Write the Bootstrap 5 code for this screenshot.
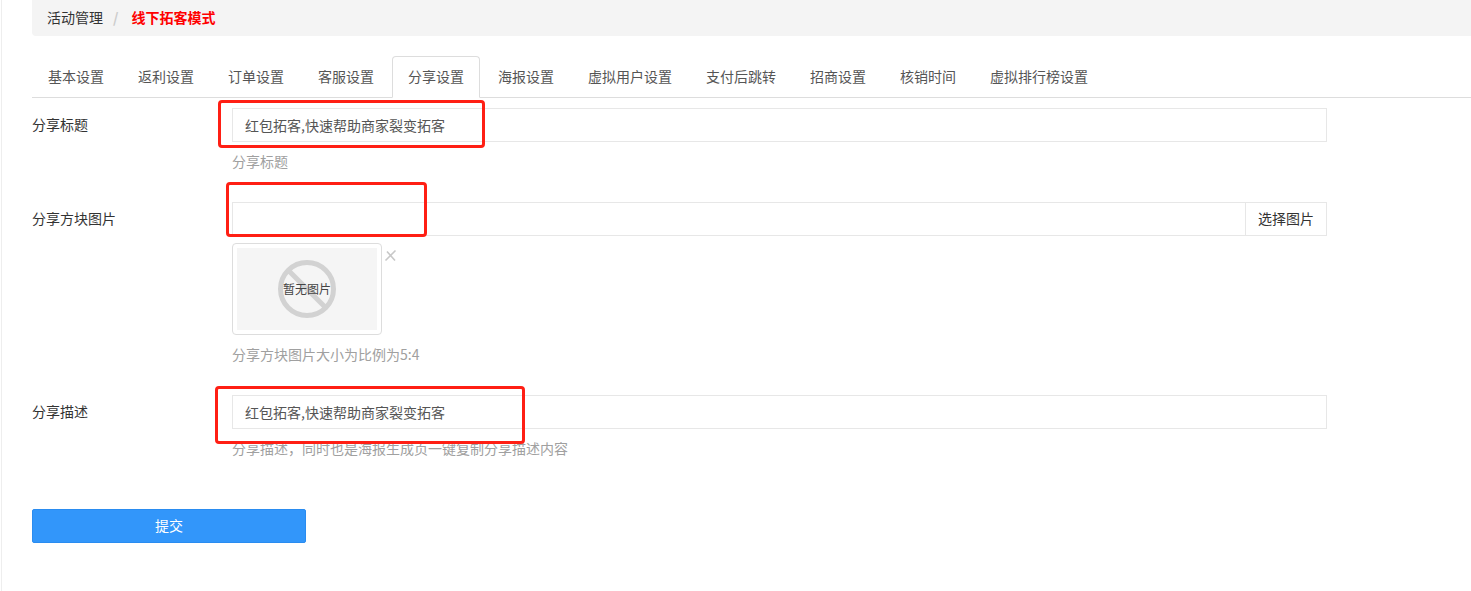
<!DOCTYPE html>
<html lang="zh">
<head>
<meta charset="utf-8">
<title>分享设置</title>
<link href="https://cdn.jsdelivr.net/npm/bootstrap@5.3.0/dist/css/bootstrap.min.css" rel="stylesheet">
<style>
html,body{height:591px;overflow:hidden;background:#fff}
body{font-family:"Noto Sans CJK SC","Liberation Sans",sans-serif;font-size:14px;color:#333}
.page-shell{margin-left:1px;border-left:1px solid #eee;height:591px;padding:0 0 0 30px}
.crumbs{background:#f4f4f4;height:36px;margin:0;padding:0 15px;border-radius:0 0 0 4px;align-items:center;font-size:14px;line-height:36px;--bs-breadcrumb-divider-color:#ccc;--bs-breadcrumb-item-padding-x:10px}
.crumbs .breadcrumb-item{color:#333;height:36px;margin-top:-2px}
.crumbs .breadcrumb-item.active{color:#f00;font-weight:700}
.crumbs .breadcrumb-item.active::before{padding-right:13px}
.tabs-row{margin-top:20px;height:42px;--bs-nav-tabs-border-color:#ddd;--bs-nav-tabs-border-radius:4px;--bs-nav-link-padding-x:15px;--bs-nav-link-padding-y:0;gap:2px}
.tabs-row .nav-link{height:42px;line-height:39px;color:#555;font-size:14px;margin:0}
.tabs-row .nav-link.active{color:#555;border-color:#ddd #ddd #fff}
.field-row{display:flex;width:1295px}
.field-label{width:200px;flex:none;padding-top:6px;line-height:20px;margin:0;color:#333}
.field-body{flex:1;position:relative}
.field-input{height:34px;border:1px solid #e7e7e7;border-radius:0;padding:0 12px;font-size:14px;color:#555;box-shadow:none}
.pick-btn{border:1px solid #e7e7e7;border-radius:0;background:#fff;color:#333;font-size:14px;padding:0 0 2px;height:34px;width:82px}
.field-hint{margin:9px 0 0;line-height:20px;color:#a0a0a0;font-size:14px}
.row-one{margin-top:10px}
.row-two{margin-top:31px}
.row-three{margin-top:31px}
.thumb-wrap{display:flex;margin-top:7px;position:relative;width:170px}
.thumb-frame{width:150px;height:92px;border:1px solid #ddd;border-radius:4px;padding:4px;background:#fff}
.thumb-inner{height:82px;background:#f5f5f5;display:flex;align-items:center;justify-content:center;position:relative}
.thumb-inner svg{position:absolute;left:40px;top:11px}
.thumb-text{position:relative;font-size:12px;color:#444}
.thumb-close{position:absolute;left:152px;top:6px;line-height:0}
.callout{position:absolute;border:3px solid #ff1f14;border-radius:4px;pointer-events:none}
.callout-one{left:-14px;top:-8px;width:267px;height:48px}
.callout-two{left:-6px;top:-20px;width:201px;height:55px}
.callout-three{left:-17px;top:-9px;width:310px;height:58px}
.submit-btn{display:block;width:274px;height:34px;margin-top:51px;padding:0 0 2px;border-radius:2px;background:#3296fa;border:1px solid #2a8cf0;color:#fff;font-size:14px}
</style>
</head>
<body>
<div class="page-shell">
  <ol class="breadcrumb crumbs d-flex">
    <li class="breadcrumb-item">活动管理</li>
    <li class="breadcrumb-item active">线下拓客模式</li>
  </ol>
  <ul class="nav nav-tabs tabs-row">
    <li class="nav-item"><a class="nav-link" href="#">基本设置</a></li>
    <li class="nav-item"><a class="nav-link" href="#">返利设置</a></li>
    <li class="nav-item"><a class="nav-link" href="#">订单设置</a></li>
    <li class="nav-item"><a class="nav-link" href="#">客服设置</a></li>
    <li class="nav-item"><a class="nav-link active" href="#">分享设置</a></li>
    <li class="nav-item"><a class="nav-link" href="#">海报设置</a></li>
    <li class="nav-item"><a class="nav-link" href="#">虚拟用户设置</a></li>
    <li class="nav-item"><a class="nav-link" href="#">支付后跳转</a></li>
    <li class="nav-item"><a class="nav-link" href="#">招商设置</a></li>
    <li class="nav-item"><a class="nav-link" href="#">核销时间</a></li>
    <li class="nav-item"><a class="nav-link" href="#">虚拟排行榜设置</a></li>
  </ul>
  <form onsubmit="return false">
    <div class="field-row row-one">
      <label class="field-label">分享标题</label>
      <div class="field-body">
        <input class="form-control field-input" value="红包拓客,快速帮助商家裂变拓客">
        <p class="field-hint">分享标题</p>
        <div class="callout callout-one"></div>
      </div>
    </div>
    <div class="field-row row-two">
      <label class="field-label">分享方块图片</label>
      <div class="field-body">
        <div class="input-group flex-nowrap">
          <input class="form-control field-input">
          <button class="btn pick-btn" type="button" style="margin-left:-1px">选择图片</button>
        </div>
        <div class="thumb-wrap">
          <div class="thumb-frame">
            <div class="thumb-inner">
              <svg width="60" height="60" viewBox="0 0 60 60"><circle cx="30" cy="30" r="26.5" fill="none" stroke="#d2d2d2" stroke-width="5"/><path d="M11 11 49 49" stroke="#d2d2d2" stroke-width="5"/></svg>
              <span class="thumb-text">暂无图片</span>
            </div>
          </div>
          <span class="thumb-close"><svg width="13" height="13" viewBox="0 0 13 13"><path d="M1.5 11.5 11.5 1.5M3 2.5l8 9" stroke="#c8c8c8" stroke-width="1.6" fill="none"/></svg></span>
        </div>
        <p class="field-hint">分享方块图片大小为比例为5:4</p>
        <div class="callout callout-two"></div>
      </div>
    </div>
    <div class="field-row row-three">
      <label class="field-label">分享描述</label>
      <div class="field-body">
        <input class="form-control field-input" value="红包拓客,快速帮助商家裂变拓客">
        <p class="field-hint">分享描述，同时也是海报生成页一键复制分享描述内容</p>
        <div class="callout callout-three"></div>
      </div>
    </div>
    <button class="btn btn-primary submit-btn" type="submit">提交</button>
  </form>
</div>
<script src="https://cdn.jsdelivr.net/npm/bootstrap@5.3.0/dist/js/bootstrap.bundle.min.js"></script>
</body>
</html>
